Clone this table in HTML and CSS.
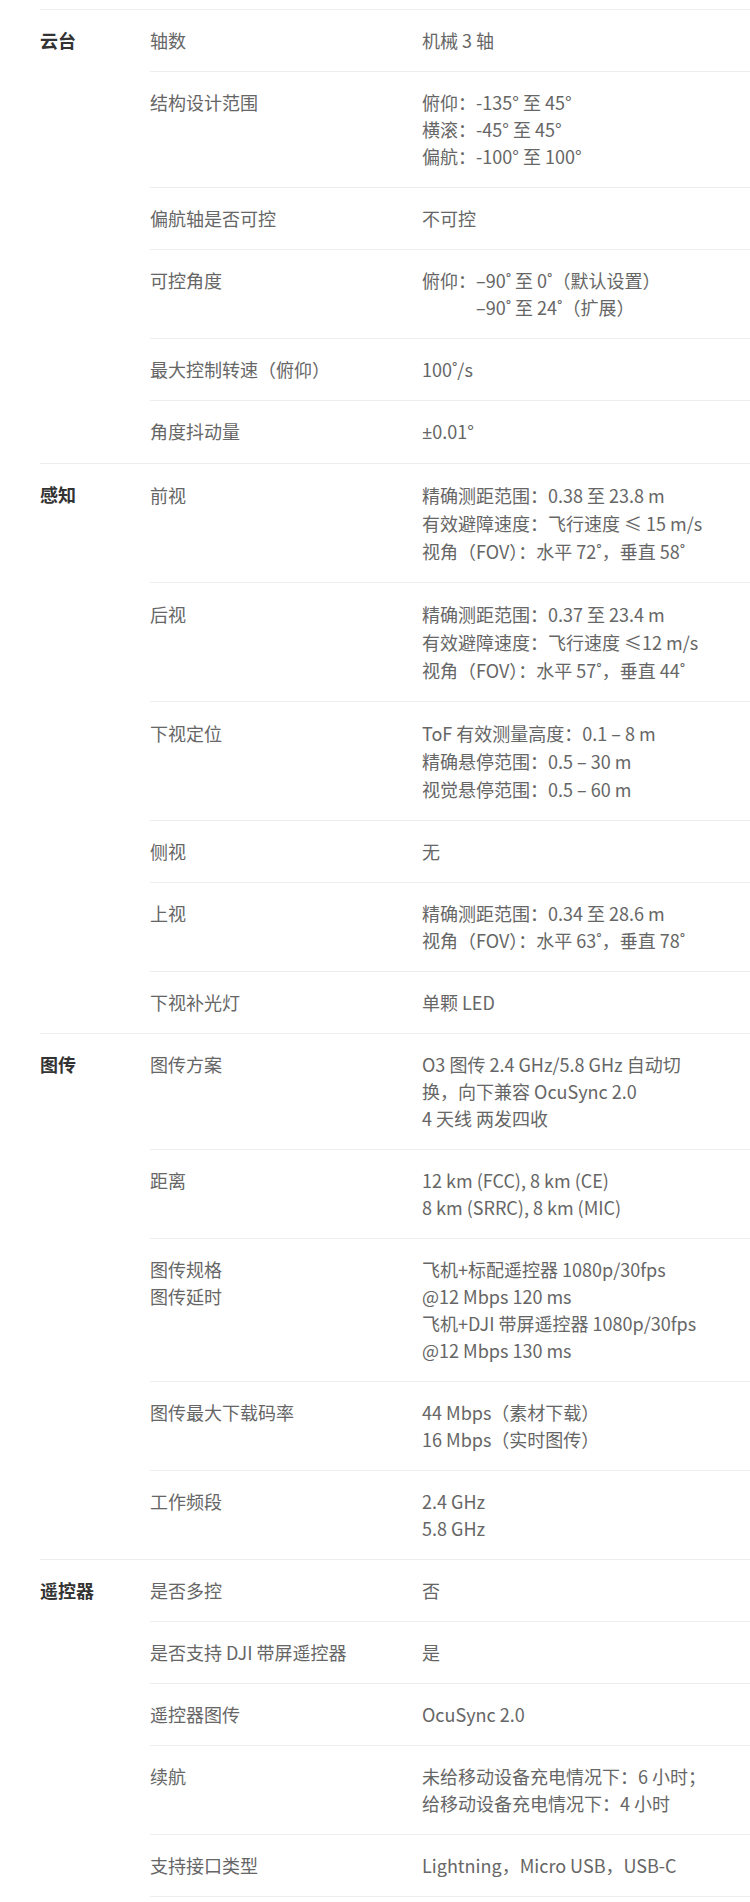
FILE: index.html
```html
<!DOCTYPE html>
<html lang="zh-CN">
<head>
    <meta charset="UTF-8">
    <meta name="viewport" content="width=device-width, initial-scale=1.0">
    <title>规格参数</title>
    <link rel="stylesheet" href="styles.css">
</head>
<body>
    <div class="specs">
        <section class="spec-group">
            <h3 class="spec-title">云台</h3>
            <div class="spec-rows">
                <div class="spec-row"><div class="spec-name">轴数</div><div class="spec-value">机械 3 轴</div></div>
                <div class="spec-row"><div class="spec-name">结构设计范围</div><div class="spec-value">俯仰：-135° 至 45°<br>横滚：-45° 至 45°<br>偏航：-100° 至 100°</div></div>
                <div class="spec-row"><div class="spec-name">偏航轴是否可控</div><div class="spec-value">不可控</div></div>
                <div class="spec-row"><div class="spec-name">可控角度</div><div class="spec-value">俯仰：–90˚ 至 0˚（默认设置）<span class="indent">–90˚ 至 24˚（扩展）</span></div></div>
                <div class="spec-row"><div class="spec-name">最大控制转速（俯仰）</div><div class="spec-value">100˚/s</div></div>
                <div class="spec-row"><div class="spec-name">角度抖动量</div><div class="spec-value"><span class="latin">±</span>0.01°</div></div>
            </div>
        </section>

        <section class="spec-group">
            <h3 class="spec-title">感知</h3>
            <div class="spec-rows">
                <div class="spec-row spec-row--loose"><div class="spec-name">前视</div><div class="spec-value">精确测距范围：0.38 至 23.8 m<br>有效避障速度：飞行速度 ≤ 15 m/s<br>视角（FOV）：水平 72˚，垂直 58˚</div></div>
                <div class="spec-row spec-row--loose"><div class="spec-name">后视</div><div class="spec-value">精确测距范围：0.37 至 23.4 m<br>有效避障速度：飞行速度 ≤12 m/s<br>视角（FOV）：水平 57˚，垂直 44˚</div></div>
                <div class="spec-row spec-row--loose"><div class="spec-name">下视定位</div><div class="spec-value">ToF 有效测量高度：0.1 – 8 m<br>精确悬停范围：0.5 – 30 m<br>视觉悬停范围：0.5 – 60 m</div></div>
                <div class="spec-row"><div class="spec-name">侧视</div><div class="spec-value">无</div></div>
                <div class="spec-row"><div class="spec-name">上视</div><div class="spec-value">精确测距范围：0.34 至 28.6 m<br>视角（FOV）：水平 63˚，垂直 78˚</div></div>
                <div class="spec-row"><div class="spec-name">下视补光灯</div><div class="spec-value">单颗 LED</div></div>
            </div>
        </section>

        <section class="spec-group">
            <h3 class="spec-title">图传</h3>
            <div class="spec-rows">
                <div class="spec-row"><div class="spec-name">图传方案</div><div class="spec-value">O3 图传 2.4 GHz/5.8 GHz 自动切<br>换，向下兼容 OcuSync 2.0<br>4 天线 两发四收</div></div>
                <div class="spec-row"><div class="spec-name">距离</div><div class="spec-value">12 km (FCC), 8 km (CE)<br>8 km (SRRC), 8 km (MIC)</div></div>
                <div class="spec-row"><div class="spec-name">图传规格<br>图传延时</div><div class="spec-value">飞机+标配遥控器 1080p/30fps<br>@12 Mbps 120 ms<br>飞机+DJI 带屏遥控器 1080p/30fps<br>@12 Mbps 130 ms</div></div>
                <div class="spec-row"><div class="spec-name">图传最大下载码率</div><div class="spec-value">44 Mbps（素材下载）<br>16 Mbps（实时图传）</div></div>
                <div class="spec-row"><div class="spec-name">工作频段</div><div class="spec-value">2.4 GHz<br>5.8 GHz</div></div>
            </div>
        </section>

        <section class="spec-group">
            <h3 class="spec-title">遥控器</h3>
            <div class="spec-rows">
                <div class="spec-row"><div class="spec-name">是否多控</div><div class="spec-value">否</div></div>
                <div class="spec-row"><div class="spec-name">是否支持 DJI 带屏遥控器</div><div class="spec-value">是</div></div>
                <div class="spec-row"><div class="spec-name">遥控器图传</div><div class="spec-value">OcuSync 2.0</div></div>
                <div class="spec-row"><div class="spec-name">续航</div><div class="spec-value">未给移动设备充电情况下：6 小时；<br>给移动设备充电情况下：4 小时</div></div>
                <div class="spec-row"><div class="spec-name">支持接口类型</div><div class="spec-value">Lightning，Micro USB，USB-C</div></div>
            </div>
        </section>
    </div>
</body>
</html>
```

FILE: styles.css
```css
* {
    margin: 0;
    padding: 0;
    box-sizing: border-box;
}

body {
    background: #fff;
    padding-top: 9px;
    font-family: "Noto Sans CJK SC", "Noto Sans", sans-serif;
    font-size: 18px;
    line-height: 27px;
    color: #666;
}

.specs {
    padding-left: 40px;
}

/* one block per category */
.spec-group {
    display: flex;
    border-top: 1px solid #ededed;
}

.spec-title {
    flex: 0 0 110px;
    padding: 17px 0;
    font-size: 18px;
    font-weight: 700;
    color: #333;
}

.spec-rows {
    flex: 1;
}

.spec-row {
    display: flex;
    padding: 17px 0;
    border-top: 1px solid #ededed;
}

.spec-row:first-child {
    border-top: none;
}

.spec-row--loose {
    line-height: 28px;
}

.spec-group:last-child .spec-row:last-child {
    border-bottom: 1px solid #ededed;
}

.spec-name {
    flex: 0 0 272px;
}

.spec-value {
    flex: 1;
    white-space: nowrap;
}

.indent {
    display: block;
    padding-left: 3em;
}

.latin {
    font-family: "Noto Sans", sans-serif;
}
```
